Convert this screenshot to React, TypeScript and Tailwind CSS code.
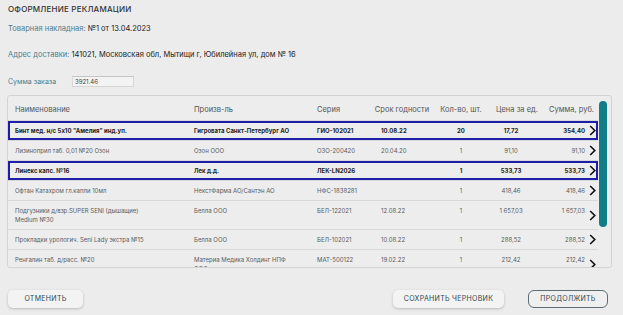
import React from "react";

type Row = {
  name: string[];
  maker: string[];
  series: string;
  exp: string;
  qty: string;
  price: string;
  sum: string;
  selected?: boolean;
};

const ROWS: Row[] = [
  { name: ["Бинт мед. н/с 5х10 \"Амелия\" инд.уп."], maker: ["Гигровата Санкт-Петербург АО"], series: "ГИО-102021", exp: "10.08.22", qty: "20", price: "17,72", sum: "354,40", selected: true },
  { name: ["Лизиноприл таб. 0,01 №20 Озон"], maker: ["Озон ООО"], series: "ОЗО-200420", exp: "20.04.20", qty: "1", price: "91,10", sum: "91,10" },
  { name: ["Линекс капс. №16"], maker: ["Лек д.д."], series: "ЛЕК-LN2026", exp: "", qty: "1", price: "533,73", sum: "533,73", selected: true },
  { name: ["Офтан Катахром гл.капли 10мл"], maker: ["НекстФарма АО/Сантэн АО"], series: "НФС-1838281", exp: "", qty: "1", price: "418,46", sum: "418,46" },
  { name: ["Подгузники д/взр.SUPER SENI (дышащие)", "Medium №30"], maker: ["Белла ООО"], series: "БЕЛ-122021", exp: "12.08.22", qty: "1", price: "1 657,03", sum: "1 657,03" },
  { name: ["Прокладки урологич. Seni Lady экстра №15"], maker: ["Белла ООО"], series: "БЕЛ-102021", exp: "10.08.22", qty: "1", price: "288,52", sum: "288,52" },
  { name: ["Ренгалин таб. д/расс. №20"], maker: ["Материа Медика Холдинг НПФ", "ООО"], series: "МАТ-500122", exp: "19.02.22", qty: "1", price: "212,42", sum: "212,42" },
];

const COLS = "grid grid-cols-[186px_123px_54px_62px_56px_56px_40px_14px]";

function Lines({ lines }: { lines: string[] }) {
  return (
    <>
      {lines.map((l, i) => (
        <div key={i}>{l}</div>
      ))}
    </>
  );
}

function Chevron() {
  return (
    <svg width="7" height="11" viewBox="0 0 7 11" className="-my-[2px]">
      <polyline points="1.2,1 5.8,5.5 1.2,10" fill="none" stroke="#111" strokeWidth="1.6" />
    </svg>
  );
}

export default function App() {
  return (
    <div className="w-[623px] h-[315px] overflow-hidden bg-[#ececec] px-[7px] pt-[4px] font-['Inter',sans-serif]">
      <div className="ml-[1px] text-[8px] leading-[10px] font-medium text-[#333] tracking-[0.2px]">
        ОФОРМЛЕНИЕ РЕКЛАМАЦИИ
      </div>
      <div className="ml-[1px] mt-[10px] text-[7.5px] leading-[10px]">
        <span className="text-[#4e7c8a]">Товарная накладная: </span>
        <span className="text-[#222]">№1 от 13.04.2023</span>
      </div>
      <div className="ml-[1px] mt-[16px] text-[7.5px] leading-[10px]">
        <span className="text-[#4e7c8a]">Адрес доставки: </span>
        <span className="text-[#222]">141021, Московская обл, Мытищи г, Юбилейная ул, дом № 16</span>
      </div>
      <div className="ml-[1px] mt-[16px] flex items-center h-[11px]">
        <span className="w-[64px] text-[7px] leading-[10px] text-[#4e7c8a]">Сумма заказа</span>
        <div className="w-[62px] h-[11px] bg-[#f3f3f3] border border-[#d6d6d6] border-t-[#c4c4c4] px-[2px] text-[6px] leading-[9px] text-[#444]">
          3921.46
        </div>
      </div>

      <div className="mt-[8px] flex w-[605px] h-[173px] border border-[#d3d3d3] rounded-[3px] bg-[#ededed] overflow-hidden">
        <div className="w-[591px] overflow-hidden">
          <div className={`${COLS} h-[25px] items-center border-b border-[#d8d8d8] text-[7.5px] leading-[9px] text-[#555] pt-[3px]`}>
            <div className="pl-[7px]">Наименование</div>
            <div>Произв-ль</div>
            <div>Серия</div>
            <div className="text-center">Срок годности</div>
            <div className="text-center">Кол-во, шт.</div>
            <div className="text-center">Цена за ед.</div>
            <div className="col-span-2 text-right pr-[5px]">Сумма, руб.</div>
          </div>
          {ROWS.map((r, i) => (
            <div
              key={i}
              className={`${COLS} pt-[5px] pb-[5px] border-b border-[#d8d8d8] text-[6px] leading-[9px] ${
                r.selected
                  ? "ring-2 ring-inset ring-[#1d1da8] font-bold text-[#1e1e1e]"
                  : "text-[#5b5b5b]"
              }`}
            >
              <div className="pl-[7px]">
                <Lines lines={r.name} />
              </div>
              <div>
                <Lines lines={r.maker} />
              </div>
              <div>{r.series}</div>
              <div className="pl-[10px]">{r.exp}</div>
              <div className="text-center">{r.qty}</div>
              <div className="text-center pr-[12px]">{r.price}</div>
              <div className="text-right">{r.sum}</div>
              <div className="flex items-center justify-center">
                <Chevron />
              </div>
            </div>
          ))}
        </div>
        <div className="w-[13px] pt-[5px] pl-[1px]">
          <div className="w-[8px] h-[126px] rounded-full bg-[#107e88]" />
        </div>
      </div>

      <div className="mt-[22px] flex items-center justify-between">
        <button className="ml-[1px] w-[75px] h-[18px] rounded-[5px] bg-[#f3f3f3] shadow-[0_1px_3px_rgba(0,0,0,0.22)] text-[7px] text-[#2c4750] tracking-[0.3px]">
          ОТМЕНИТЬ
        </button>
        <div className="mr-[8px] flex items-center gap-[24px]">
          <button className="w-[111px] h-[18px] rounded-[5px] bg-[#f3f3f3] shadow-[0_1px_3px_rgba(0,0,0,0.22)] text-[7px] text-[#2c4750] tracking-[0.3px]">
            СОХРАНИТЬ ЧЕРНОВИК
          </button>
          <button className="w-[80px] h-[18px] rounded-[6px] border border-[#5d6d72] bg-[#efefef] text-[7px] text-[#2c4750] tracking-[0.3px]">
            ПРОДОЛЖИТЬ
          </button>
        </div>
      </div>
    </div>
  );
}
